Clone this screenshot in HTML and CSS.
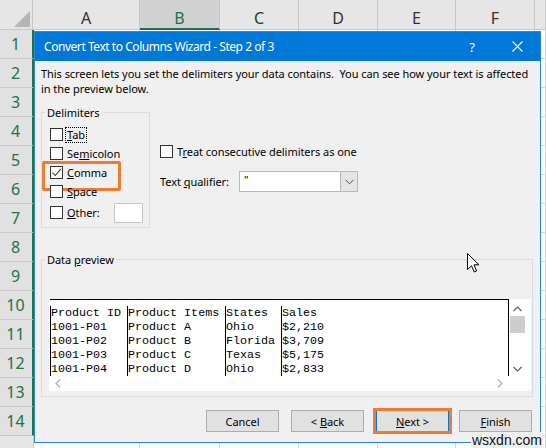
FILE: index.html
```html
<!DOCTYPE html>
<html>
<head>
<meta charset="utf-8">
<title>Convert Text to Columns Wizard</title>
<link rel="stylesheet" href="styles.css">
</head>
<body>
<div class="screen">
  <div class="sheet">
    <div class="colheads">
      <div class="corner"><span class="tri"></span></div>
      <div class="ch w-a">A</div>
      <div class="ch w-b sel">B</div>
      <div class="ch w-c">C</div>
      <div class="ch w-d">D</div>
      <div class="ch w-e">E</div>
      <div class="ch w-f">F</div>
      <div class="ch w-g"></div>
    </div>
    <div class="sheetbody">
      <div class="rowheads">
        <div class="rh">1</div>
        <div class="rh">2</div>
        <div class="rh">3</div>
        <div class="rh">4</div>
        <div class="rh">5</div>
        <div class="rh">6</div>
        <div class="rh">7</div>
        <div class="rh">8</div>
        <div class="rh">9</div>
        <div class="rh">10</div>
        <div class="rh">11</div>
        <div class="rh">12</div>
        <div class="rh">13</div>
        <div class="rh">14</div>
        <div class="rh plain"></div>
      </div>
      <div class="cells">
        <div class="col w-a2"></div>
        <div class="col w-b"></div>
        <div class="col w-c"></div>
        <div class="col w-d"></div>
        <div class="col w-e"></div>
        <div class="col w-f"></div>
        <div class="col w-g"></div>
      </div>
    </div>
  </div>

  <div class="dialog">
    <div class="titlebar">
      <span class="title">Convert Text to Columns Wizard - Step 2 of 3</span>
      <span class="tb-help">?</span>
      <span class="tb-close"><svg width="11" height="11" viewBox="0 0 11 11"><path d="M0.5 0.5 L10.5 10.5 M10.5 0.5 L0.5 10.5" stroke="#fff" stroke-width="1.1" fill="none"/></svg></span>
    </div>
    <div class="dlg-body">
      <p class="desc">This screen lets you set the delimiters your data contains.&nbsp; You can see how your text is affected<br>in the preview below.</p>

      <div class="options">
        <fieldset class="group delims">
          <legend>Delimiters</legend>
          <div class="chk-row"><span class="box"></span><span class="lbl focus"><u>T</u>ab</span></div>
          <div class="chk-row"><span class="box"></span><span class="lbl">Se<u>m</u>icolon</span></div>
          <div class="chk-row hl"><span class="box"><svg width="11" height="11" viewBox="0 0 11 11"><path d="M1.5 5.5 L4.2 8.5 L9.8 1.8" stroke="#3a3a3a" stroke-width="1.1" fill="none"/></svg></span><span class="lbl"><u>C</u>omma</span></div>
          <div class="chk-row"><span class="box"></span><span class="lbl"><u>S</u>pace</span></div>
          <div class="chk-row other"><span class="box"></span><span class="lbl"><u>O</u>ther:</span><span class="textbox"></span></div>
        </fieldset>
        <div class="opts-right">
          <div class="chk-row"><span class="box"></span><span class="lbl">T<u>r</u>eat consecutive delimiters as one</span></div>
          <div class="qual-row">
            <span class="qlabel">Text <u>q</u>ualifier:</span>
            <div class="combo">
              <span class="cval">"</span>
              <span class="cbtn"><svg width="9" height="6" viewBox="0 0 9 6"><path d="M0.5 0.8 L4.5 4.8 L8.5 0.8" stroke="#505050" stroke-width="1" fill="none"/></svg></span>
            </div>
          </div>
        </div>
      </div>

      <fieldset class="group preview-group">
        <legend>Data <u>p</u>review</legend>
        <div class="preview">
          <div class="pv-main">
            <div class="pv-data">
              <div class="pcol c1"><div>Product ID</div><div>1001-P01</div><div>1001-P02</div><div>1001-P03</div><div>1001-P04</div></div>
              <div class="pcol c2"><div>Product Items</div><div>Product A</div><div>Product B</div><div>Product C</div><div>Product D</div></div>
              <div class="pcol c3"><div>States</div><div>Ohio</div><div>Florida</div><div>Texas</div><div>Ohio</div></div>
              <div class="pcol c4"><div>Sales</div><div>$2,210</div><div>$3,709</div><div>$5,175</div><div>$2,833</div></div>
            </div>
            <div class="vscroll">
              <svg class="arr" width="9" height="6" viewBox="0 0 9 6"><path d="M0.5 5 L4.5 1 L8.5 5" stroke="#606060" stroke-width="1.2" fill="none"/></svg>
              <span class="thumb"></span>
              <span class="vspace"></span>
              <svg class="arr" width="9" height="6" viewBox="0 0 9 6"><path d="M0.5 1 L4.5 5 L8.5 1" stroke="#606060" stroke-width="1.2" fill="none"/></svg>
            </div>
          </div>
          <div class="hscroll">
            <svg width="6" height="9" viewBox="0 0 6 9"><path d="M5 0.5 L1 4.5 L5 8.5" stroke="#b0b0b0" stroke-width="1.2" fill="none"/></svg>
            <svg width="6" height="9" viewBox="0 0 6 9"><path d="M1 0.5 L5 4.5 L1 8.5" stroke="#b0b0b0" stroke-width="1.2" fill="none"/></svg>
          </div>
        </div>
      </fieldset>

      <div class="buttons">
        <span class="btn"><span>Cancel</span></span>
        <span class="btn"><span>&lt; <u>B</u>ack</span></span>
        <span class="btn default"><span><u>N</u>ext &gt;</span></span>
        <span class="btn"><span><u>F</u>inish</span></span>
      </div>
    </div>
  </div>

  <svg class="cursor" width="13" height="20" viewBox="0 0 13 20"><path d="M0.5 0.5 L0.5 16.5 L4.5 12.8 L7.2 19 L9.6 18 L7 11.8 L12 11.8 Z" fill="#fff" stroke="#000" stroke-width="1" stroke-linejoin="miter"/></svg>
  <div class="watermark">wsxdn.com</div>
</div>
</body>
</html>
```

FILE: styles.css
```css
* { box-sizing: border-box; }

body {
  margin: 0;
  width: 546px;
  height: 448px;
  overflow: hidden;
  background: #fff;
}

.screen {
  position: relative;
  width: 546px;
  height: 448px;
  overflow: hidden;
  font-family: "Noto Sans", "Open Sans", sans-serif;
}

/* ---------- spreadsheet ---------- */
.sheet { display: flex; flex-direction: column; }

.colheads { display: flex; height: 30px; }
.corner {
  width: 33px;
  flex: none;
  background: #e6e6e6;
  border-right: 1px solid #c8c8c8;
  border-bottom: 1px solid #c8c8c8;
  display: flex;
  align-items: flex-end;
  justify-content: flex-end;
  padding: 0 2px 2px 0;
}
.tri {
  width: 16px;
  height: 16px;
  background: #b5b5b5;
  clip-path: polygon(100% 0, 100% 100%, 0 100%);
}
.ch {
  flex: none;
  background: #e6e6e6;
  border-right: 1px solid #c8c8c8;
  border-bottom: 1px solid #c8c8c8;
  color: #333;
  font-size: 16px;
  line-height: 20px;
  padding-top: 8px;
  text-align: center;
}
.ch.sel {
  background: #d2d2d2;
  color: #217346;
  border-bottom: 2px solid #217346;
}
.w-a { width: 107px; }
.w-a2 { width: 106px; }
.w-b { width: 80px; }
.w-c { width: 79px; }
.w-d { width: 79px; }
.w-e { width: 78px; }
.w-f { width: 79px; }
.w-g { flex: 1 1 auto !important; }

.sheetbody { display: flex; }
.rowheads { width: 34px; flex: none; display: flex; flex-direction: column; }
.rh {
  height: 29px;
  background: #e1e1e1;
  border-right: 2px solid #217346;
  border-bottom: 1px solid #c8c8c8;
  color: #217346;
  font-size: 16px;
  line-height: 28px;
  text-align: center;
  padding-right: 1px;
}
.rh.plain {
  background: #e6e6e6;
  border-right: 1px solid #c8c8c8;
}
.cells { flex: 1; display: flex; height: 435px; }
.col {
  flex: none;
  border-right: 1px solid #d4d4d4;
  background: repeating-linear-gradient(to bottom, transparent 0 28px, #d4d4d4 28px 29px);
}

/* ---------- dialog ---------- */
.dialog {
  position: absolute;
  left: 34px;
  top: 31px;
  width: 507px;
  height: 412px;
  border: 1px solid #2b86d6;
  background: #f0f0f0;
  display: flex;
  flex-direction: column;
  color: #000;
  font-size: 11px;
  letter-spacing: -0.05px;
}

.titlebar {
  height: 29px;
  flex: none;
  background: #0078d7;
  color: #fff;
  display: flex;
  align-items: center;
  padding-left: 9px;
}
.title { font-size: 12px; letter-spacing: -0.45px; flex: 1; }
.tb-help {
  width: 30px;
  text-align: center;
  font-size: 13px;
}
.tb-close {
  width: 46px;
  height: 29px;
  display: flex;
  align-items: center;
  justify-content: center;
  margin-left: 7px;
}

.dlg-body {
  flex: 1;
  display: flex;
  flex-direction: column;
  padding: 5px 7px 0 6px;
}

.desc {
  margin: 0;
  line-height: 15px;
  white-space: nowrap;
}

.options {
  display: flex;
  align-items: flex-start;
  margin-top: 9px;
}

.group {
  margin: 0;
  border: 1px solid #dcdcdc;
  min-width: 0;
}
.group legend {
  padding: 0 2px;
  line-height: 15px;
}

.delims {
  width: 109px;
  flex: none;
  padding: 5px 0 4px 3px;
}

.chk-row {
  display: flex;
  align-items: center;
  height: 19px;
  margin-left: 5px;
  white-space: nowrap;
  position: relative;
}
.box {
  width: 13px;
  height: 13px;
  flex: none;
  background: #fff;
  border: 1px solid #333;
  display: flex;
  align-items: center;
  justify-content: center;
}
.lbl {
  margin-left: 2px;
  padding: 0 2px;
  line-height: 16px;
}
.lbl.focus { outline: 1px dotted #000; outline-offset: -1px; }

.chk-row.hl::after {
  content: "";
  position: absolute;
  left: -8px;
  top: -2px;
  width: 73px;
  height: 24px;
  border: 3px solid #ed7d31;
  border-radius: 2px;
}

.chk-row.other { height: 21px; margin-top: 1px; margin-right: 6px; }
.textbox {
  margin-left: auto;
  width: 29px;
  height: 20px;
  background: #fff;
  border: 1px solid #c6c6c6;
}

.opts-right {
  display: flex;
  flex-direction: column;
  padding-top: 37px;
  margin-left: 5px;
}
.opts-right .chk-row { margin-left: 5px; }
.qual-row {
  display: flex;
  align-items: center;
  height: 21px;
  margin-top: 10px;
  margin-left: 5px;
}
.qlabel { width: 79px; flex: none; white-space: nowrap; }
.combo {
  width: 119px;
  height: 21px;
  background: #fff;
  border: 1px solid #b9b9b9;
  display: flex;
}
.cval { flex: 1; padding-left: 4px; line-height: 16px; }
.cbtn {
  width: 17px;
  background: #e5e5e5;
  border-left: 1px solid #b9b9b9;
  display: flex;
  align-items: center;
  justify-content: center;
}

.preview-group {
  margin-top: 24px;
  padding: 32px 0 5px 3px;
}
.preview {
  margin-left: 4px;
  margin-right: 1px;
  background: #fff;
  display: flex;
  flex-direction: column;
}
.pv-main { display: flex; height: 77px; }
.pv-data {
  width: 459px;
  flex: none;
  display: flex;
  border-top: 1px solid #000;
  border-right: 1px solid #000;
  margin-left: 1px;
  font-family: "Liberation Mono", "Courier New", monospace;
  font-size: 11.7px;
  letter-spacing: 0;
  line-height: 14px;
  padding-top: 6px;
  white-space: pre;
}
.pcol { border-left: 1px solid #000; flex: none; }
.c1 { width: 77px; }
.c2 { width: 98px; }
.c3 { width: 56px; }
.c4 { flex: 1; }

.vscroll {
  width: 17px;
  flex: none;
  display: flex;
  flex-direction: column;
  align-items: center;
  padding-top: 7px;
  padding-bottom: 4px;
}
.vscroll .arr { flex: none; }
.thumb {
  width: 15px;
  height: 17px;
  background: #cdcdcd;
  margin-top: 4px;
}
.vspace { flex: 1; }

.hscroll {
  height: 15px;
  width: 459px;
  display: flex;
  align-items: center;
  justify-content: space-between;
  padding: 0 5px 0 6px;
}

.buttons {
  display: flex;
  justify-content: flex-end;
  margin-top: 13px;
  padding-right: 1px;
}
.btn {
  width: 73px;
  height: 22px;
  background: #e1e1e1;
  border: 1px solid #adadad;
  display: flex;
  align-items: center;
  justify-content: center;
  margin-left: 12px;
  white-space: pre;
}
.btn.default {
  border: 1px solid #0078d7;
  position: relative;
}
.btn.default::after {
  content: "";
  position: absolute;
  left: -4px;
  top: -3px;
  right: -4px;
  bottom: -3px;
  border: 3px solid #ed7d31;
}
.btn:last-child { margin-left: 10px; }

.cursor {
  position: absolute;
  left: 467px;
  top: 253px;
}

.watermark {
  position: absolute;
  left: 471px;
  top: 432px;
  font-family: "Liberation Sans", Arial, sans-serif;
  font-size: 14px;
  line-height: 16px;
  color: #111;
  background: #f0f0f0;
  padding: 0 1px;
}
```
